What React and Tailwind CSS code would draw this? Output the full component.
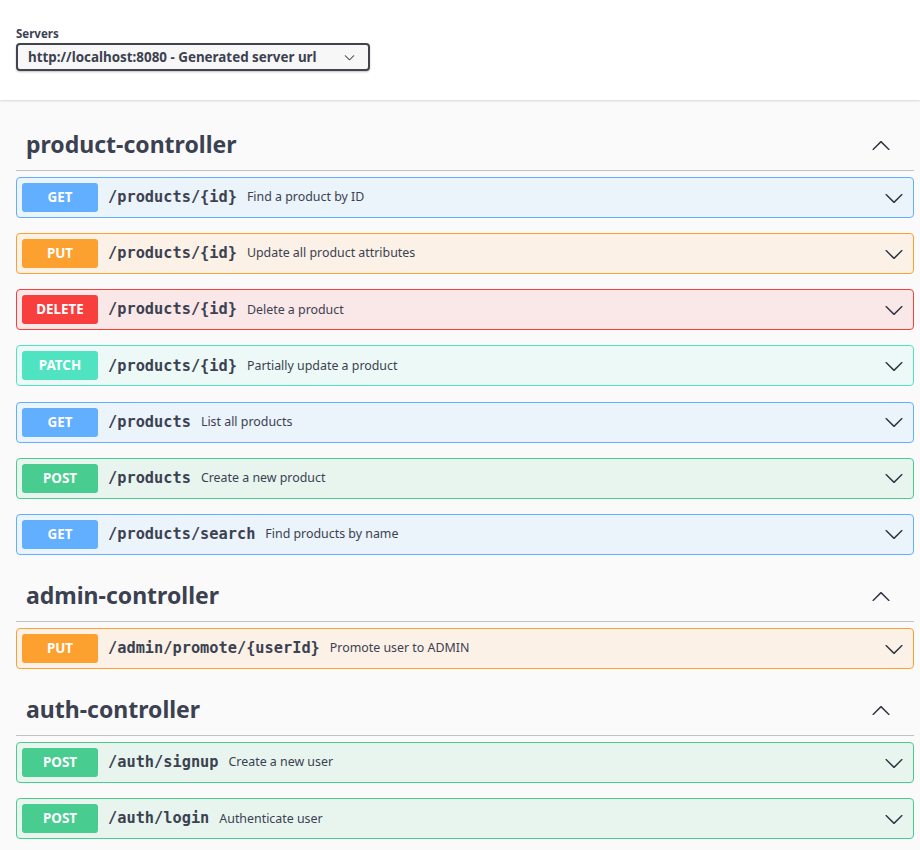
import React from "react";

const sans = "font-['Noto_Sans','Open_Sans',sans-serif]";
const mono = "font-['DejaVu_Sans_Mono','Liberation_Mono',monospace]";

const methodStyles = {
  GET: { row: "bg-[#ebf3fb] border-[#61affe]", badge: "bg-[#61affe]" },
  PUT: { row: "bg-[#fbf1e6] border-[#fca130]", badge: "bg-[#fca130]" },
  DELETE: { row: "bg-[#fae7e7] border-[#f93e3e]", badge: "bg-[#f93e3e]" },
  PATCH: { row: "bg-[#edf9f6] border-[#50e3c2]", badge: "bg-[#50e3c2]" },
  POST: { row: "bg-[#e8f5ef] border-[#49cc90]", badge: "bg-[#49cc90]" },
};

const sections = [
  {
    name: "product-controller",
    ops: [
      ["GET", "/products/{id}", "Find a product by ID"],
      ["PUT", "/products/{id}", "Update all product attributes"],
      ["DELETE", "/products/{id}", "Delete a product"],
      ["PATCH", "/products/{id}", "Partially update a product"],
      ["GET", "/products", "List all products"],
      ["POST", "/products", "Create a new product"],
      ["GET", "/products/search", "Find products by name"],
    ],
  },
  {
    name: "admin-controller",
    ops: [["PUT", "/admin/promote/{userId}", "Promote user to ADMIN"]],
  },
  {
    name: "auth-controller",
    ops: [
      ["POST", "/auth/signup", "Create a new user"],
      ["POST", "/auth/login", "Authenticate user"],
    ],
  },
];

function ArrowDown({ className }) {
  return (
    <svg viewBox="0 0 20 20" className={className} fill="currentColor">
      <path d="M17.418 6.109c.272-.268.709-.268.979 0s.271.701 0 .969l-7.908 7.83c-.27.268-.707.268-.979 0l-7.908-7.83c-.27-.268-.27-.701 0-.969.271-.268.709-.268.979 0L10 13.25l7.418-7.141z" />
    </svg>
  );
}

function ArrowUp({ className }) {
  return (
    <svg viewBox="0 0 20 20" className={className} fill="currentColor">
      <path d="M17.418 14.908c.272.268.709.268.979 0s.271-.701 0-.969l-7.908-7.83c-.27-.268-.707-.268-.979 0l-7.908 7.83c-.27.268-.27.701 0 .969.271.268.709.268.979 0L10 7.767l7.418 7.141z" />
    </svg>
  );
}

function Operation({ method, path, summary }) {
  const s = methodStyles[method];
  return (
    <div className={`mb-[15.17px] flex items-center rounded border p-[5px] ${s.row}`}>
      <span
        className={`w-[76px] shrink-0 rounded-[3px] py-[6px] text-center text-[13.4px] leading-[17px] font-bold text-white ${s.badge}`}
      >
        {method}
      </span>
      <span className={`ml-[10px] text-[15.3px] font-bold text-[#3b4151] ${mono}`}>{path}</span>
      <span className="ml-[10px] flex-1 text-[12.4px] text-[#3b4151]">{summary}</span>
      <ArrowDown className="mr-[4px] h-5 w-5 text-[#2f3542]" />
    </div>
  );
}

export default function App() {
  return (
    <div className={`min-h-screen bg-[#fafafa] text-[#3b4151] ${sans}`}>
      <div className="bg-white pt-[26px] pb-[29px] shadow-[0_1px_2px_0_rgba(0,0,0,0.15)]">
        <div className="px-4">
          <div className="text-[11.5px] leading-[16px] font-bold">Servers</div>
          <div className="mt-[1px] flex h-[28px] w-[354px] items-center justify-between rounded border-2 border-[#41444e] bg-[#f7f7f7] pr-[13px] pl-[10px] shadow-[0_1px_2px_0_rgba(0,0,0,0.25)]">
            <span className="text-[13.4px] font-bold">http://localhost:8080 - Generated server url</span>
            <ArrowDown className="h-[11px] w-[11px] text-[#3b4151]" />
          </div>
        </div>
      </div>

      <div className="w-[914px] pt-[19px] pl-4">
        {sections.map((section) => (
          <div key={section.name}>
            <div className="mb-[6px] flex items-center border-b border-[#3b4151]/30 py-[10px] pr-[23px] pl-[10px]">
              <h4 className="flex-1 text-[23px] leading-[31px] font-bold">{section.name}</h4>
              <ArrowUp className="h-5 w-5 text-[#2f3542]" />
            </div>
            {section.ops.map(([method, path, summary], i) => (
              <Operation key={i} method={method} path={path} summary={summary} />
            ))}
          </div>
        ))}
      </div>
    </div>
  );
}
